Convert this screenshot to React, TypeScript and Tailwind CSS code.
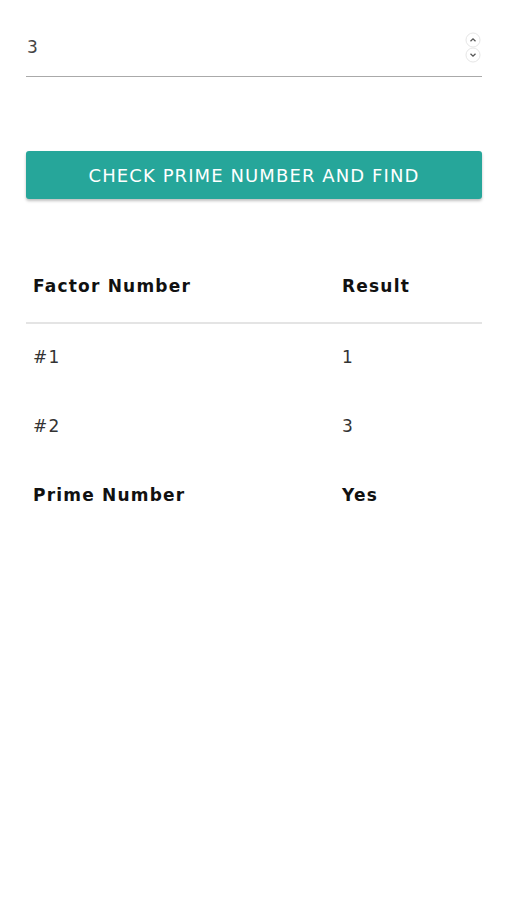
import React from "react";

const rows = [
  { label: "#1", value: "1" },
  { label: "#2", value: "3" },
];

function Spinner() {
  return (
    <div className="flex flex-col items-center">
      <svg width="16" height="16" viewBox="0 0 16 16">
        <circle cx="8" cy="8" r="7" fill="#fff" stroke="#e6e6e6" />
        <path d="M5.5 9.2 L8 6.8 L10.5 9.2" fill="none" stroke="#555" strokeWidth="1.3" />
      </svg>
      <svg width="16" height="16" viewBox="0 0 16 16" className="-mt-[1px]">
        <circle cx="8" cy="8" r="7" fill="#fff" stroke="#e6e6e6" />
        <path d="M5.5 6.8 L8 9.2 L10.5 6.8" fill="none" stroke="#555" strokeWidth="1.3" />
      </svg>
    </div>
  );
}

export default function App() {
  return (
    <div className="min-h-[900px] bg-white pl-[26px] pr-[24px] pt-[25px] font-['DejaVu_Sans',sans-serif] w-[506px]">
      <div className="flex items-center h-[52px] border-b-[1.5px] border-[#aaaaaa]">
        <span className="flex-1 pl-[1px] -mt-[5px] text-[17px] text-[#444]">3</span>
        <div className="pr-[1px] -mt-[6px]">
          <Spinner />
        </div>
      </div>

      <button className="mt-[74px] w-full h-[48px] rounded-[3px] bg-[#26a69a] text-white text-[18px] tracking-[1.1px] shadow-[0_2px_3px_rgba(0,0,0,0.25)]">
        CHECK PRIME NUMBER AND FIND
      </button>

      <table className="mt-[52px] w-full text-[17px] tracking-[1.2px] border-collapse">
        <thead>
          <tr className="h-[72px] border-b-2 border-[#e4e4e4]">
            <th className="w-[309px] pl-[7px] text-left font-bold text-[#111]">Factor Number</th>
            <th className="pl-[7px] text-left font-bold text-[#111]">Result</th>
          </tr>
        </thead>
        <tbody>
          {rows.map((r) => (
            <tr key={r.label} className="h-[69px]">
              <td className="pl-[7px] text-[#333]">{r.label}</td>
              <td className="pl-[7px] text-[#333]">{r.value}</td>
            </tr>
          ))}
          <tr className="h-[69px]">
            <td className="pl-[7px] font-bold text-[#111]">Prime Number</td>
            <td className="pl-[7px] font-bold text-[#111]">Yes</td>
          </tr>
        </tbody>
      </table>
    </div>
  );
}
